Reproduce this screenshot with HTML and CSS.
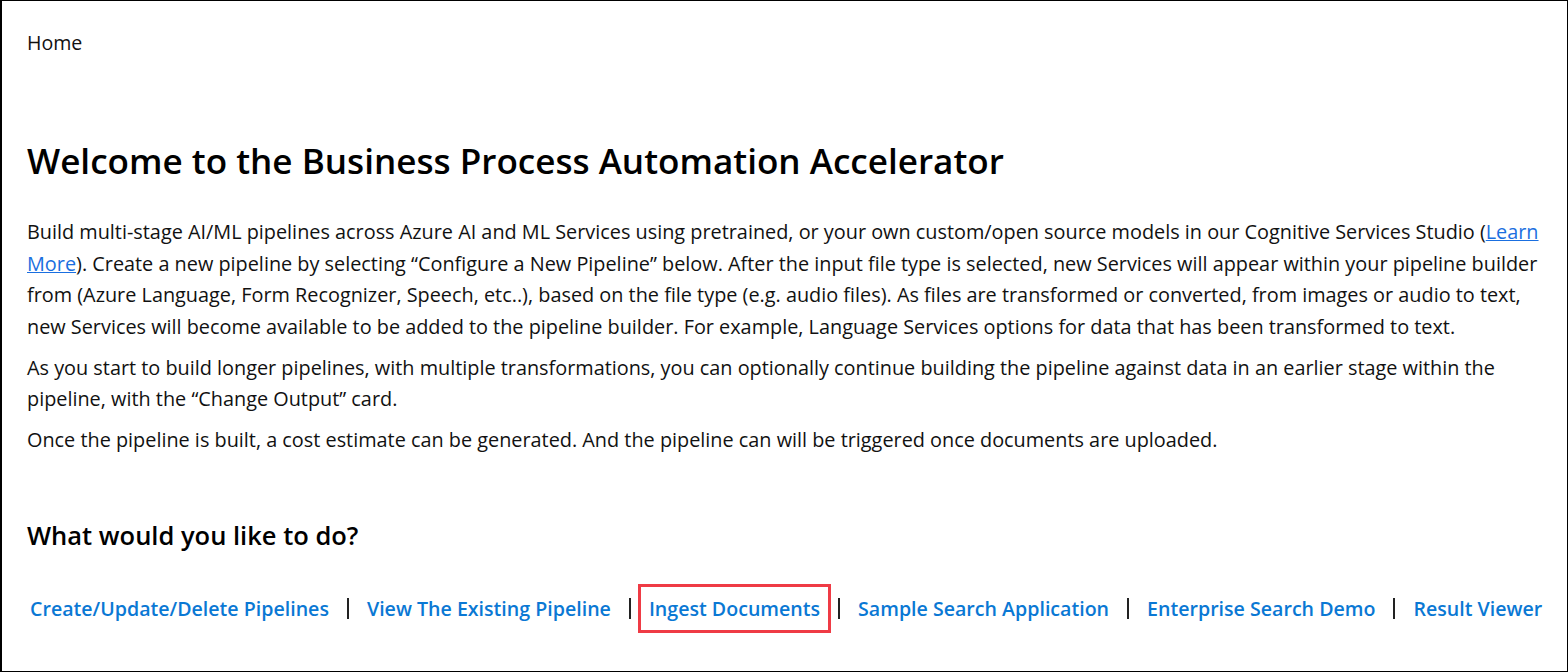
FILE: index.html
```html
<!DOCTYPE html>
<html lang="en">
<head>
<meta charset="utf-8">
<title>Business Process Automation Accelerator</title>
<link rel="stylesheet" href="styles.css">
</head>
<body>
<div class="frame">
  <nav class="crumb">Home</nav>
  <main class="content">
    <h1 class="title">Welcome to the Business Process Automation Accelerator</h1>
    <p class="para">Build multi-stage AI/ML pipelines across Azure AI and ML Services using pretrained, or your own custom/open source models in our Cognitive Services Studio (<a class="inline-link" href="#">Learn More</a>). Create a new pipeline by selecting “Configure a New Pipeline” below. After the input file type is selected, new Services will appear within your pipeline builder from (Azure Language, Form Recognizer, Speech, etc..), based on the file type (e.g. audio files). As files are transformed or converted, from images or audio to text, new Services will become available to be added to the pipeline builder. For example, Language Services options for data that has been transformed to text.</p>
    <p class="para">As you start to build longer pipelines, with multiple transformations, you can optionally continue building the pipeline against data in an earlier stage within the pipeline, with the “Change Output” card.</p>
    <p class="para">Once the pipeline is built, a cost estimate can be generated. And the pipeline can will be triggered once documents are uploaded.</p>
    <h2 class="subtitle">What would you like to do?</h2>
    <div class="actions">
      <a class="action" href="#">Create/Update/Delete Pipelines</a>
      <span class="sep"></span>
      <a class="action" href="#">View The Existing Pipeline</a>
      <span class="sep"></span>
      <a class="action highlighted" href="#">Ingest Documents</a>
      <span class="sep"></span>
      <a class="action" href="#">Sample Search Application</a>
      <span class="sep"></span>
      <a class="action" href="#">Enterprise Search Demo</a>
      <span class="sep"></span>
      <a class="action" href="#">Result Viewer</a>
    </div>
  </main>
</div>
</body>
</html>
```

FILE: styles.css
```css
* { box-sizing: border-box; }
html, body { margin: 0; padding: 0; background: #fff; }
body {
  font-family: "Open Sans", "Noto Sans", sans-serif;
  color: #111;
}
.frame {
  width: 1568px;
  height: 672px;
  border: 1px solid #000;
  border-left-width: 2px;
  padding: 0 18px 0 25px;
  overflow: hidden;
}
.crumb {
  font-size: 19.6px;
  padding-top: 29px;
  line-height: 26px;
  color: #111;
}
.title {
  margin: 81px 0 0;
  font-size: 35.1px;
  font-weight: 600;
  line-height: 46px;
  color: #000;
}
.para {
  margin: 33px 0 0;
  font-size: 19.85px;
  line-height: 31.5px;
}
.para + .para { margin-top: 9.5px; }
.inline-link { color: #1a6fe0; text-decoration: underline; }
.subtitle {
  margin: 62px 0 0;
  font-size: 25.5px;
  font-weight: 600;
  line-height: 34px;
  color: #000;
}
.actions {
  display: flex;
  align-items: center;
  margin: 32px 0 0 -8px;
}
.action {
  flex: 0 0 auto;
  white-space: nowrap;
  color: #0a78d4;
  font-weight: 600;
  font-size: 19.6px;
  text-decoration: none;
  line-height: 27px;
  padding: 8px 8px;
  border: 3px solid transparent;
}
.action.highlighted { border-color: #ef3b45; }
.sep {
  flex: 0 0 auto;
  width: 2px;
  height: 21px;
  background: #222;
  margin: 0 7px;
}
```
